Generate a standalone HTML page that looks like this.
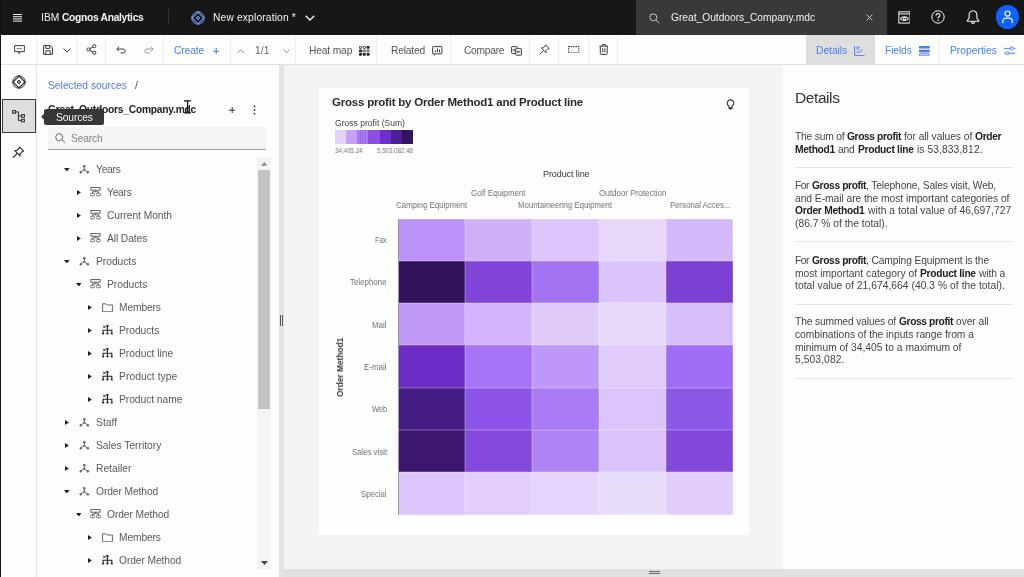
<!DOCTYPE html>
<html>
<head>
<meta charset="utf-8">
<title>IBM Cognos Analytics</title>
<style>
*{box-sizing:border-box;margin:0;padding:0}
html,body{width:1024px;height:577px;overflow:hidden;background:#fdfdfc;font-family:"Liberation Sans",sans-serif;color:#333}
.abs{position:absolute}
#root{position:relative;width:1024px;height:577px;overflow:hidden;background:#fdfdfc}
/* header */
#hdr{left:0;top:0;width:1024px;height:34.5px;background:#171717}
#hdr .t{position:absolute;color:#f4f4f4;font-size:11px;white-space:nowrap}
#srch{left:636px;top:0;width:250.8px;height:34.5px;background:#393939}
/* toolbar */
#tb{left:0;top:34.5px;width:1024px;height:30px;background:#fdfdfc;border-bottom:1px solid #dfdfdf}
#tb .sep{position:absolute;top:0;width:1px;height:29px;background:#e6e6e6}
#tb .t{position:absolute;font-size:11px;color:#555;white-space:nowrap;top:8px}
#tb .b{color:#4b7cf3}
/* left rail */
#rail{left:0;top:65px;width:37px;height:512px;background:#fdfdfc;border-right:1px solid #e4e4e4}
#edge{left:0;top:0;width:1.25px;height:577px;background:#111}
/* left panel */
#lp{left:37px;top:65px;width:242px;height:512px;background:#fdfdfc}
#div1{left:279px;top:65px;width:5px;height:512px;background:#e3e3e3}
#canvas{left:284px;top:65px;width:499px;height:504.4px;background:#f3f3f3}
#bot{left:284px;top:569.4px;width:740px;height:8px;background:#e0e0e0;z-index:5}
#card{left:319px;top:88px;width:430px;height:447px;background:#fefefd}
#rp{left:783px;top:65px;width:241px;height:512px;background:#fdfdfc}
.tree{position:absolute;font-size:11px;color:#555;white-space:nowrap}
.rt{position:absolute;left:795px;font-size:11px;line-height:13px;color:#444;white-space:nowrap}
.rt b{color:#222}
.hr{position:absolute;left:794.5px;width:218.5px;height:1px;background:#e2e2e2}
.tx{position:absolute;white-space:nowrap;line-height:normal;will-change:transform}
.bl{display:inline-block;width:0;height:0;vertical-align:baseline}
.tx b{font-weight:700;color:#222;letter-spacing:-0.21px}
</style>
</head>
<body>
<div id="root">
  <div id="hdr" class="abs"></div>
  <div id="srch" class="abs"></div>
  <div id="tb" class="abs"></div>
  <div id="rail" class="abs"></div>
  <div id="lp" class="abs"></div>
  <div id="div1" class="abs"></div>
  <div id="canvas" class="abs"></div>
  <div id="bot" class="abs"></div>
  <div id="card" class="abs"></div>
  <div id="rp" class="abs"></div>
<div class="hr" style="top:166.5px"></div><div class="hr" style="top:241px"></div><div class="hr" style="top:304.2px"></div><div class="hr" style="top:378.2px"></div>
<svg class="abs" style="left:13px;top:13.5px;" width="9" height="8" viewBox="0 0 9 8"><g stroke="#f4f4f4" stroke-width="1"><path d="M0 .5H9M0 2.7H9M0 4.9H9M0 7.1H9"/></g></svg>
<div class="abs" style="left:167.5px;top:9px;width:1px;height:16px;background:#323232"></div>
<svg class="abs" style="left:189.6px;top:9.600000000000001px;" width="16" height="16" viewBox="0 0 16 16"><g fill="none" stroke="#6a9bea" stroke-width="1"><circle cx="8" cy="8" r="6.2"/><path d="M8 2L14 8L8 14L2 8Z" stroke-width="1.15"/><path d="M8 6L10 8L8 10L6 8Z" fill="#6a9bea" fill-opacity=".55" stroke-width=".8"/></g></svg>
<svg class="abs" style="left:305px;top:15px;" width="10" height="6" viewBox="0 0 10 6"><path d="M.7 .7L5 5L9.3 .7" fill="none" stroke="#f4f4f4" stroke-width="1.3"/></svg>
<svg class="abs" style="left:648.5px;top:12.5px;" width="11" height="11" viewBox="0 0 11 11"><g fill="none" stroke="#c6c6c6" stroke-width="1"><circle cx="4.3" cy="4.3" r="3.5"/><path d="M6.9 6.9L10.3 10.3"/></g></svg>
<svg class="abs" style="left:865.5px;top:14px;" width="7" height="7" viewBox="0 0 7 7"><path d="M.6 .6L6.4 6.4M6.4 .6L.6 6.4" stroke="#c6c6c6" stroke-width="1" fill="none"/></svg>
<svg class="abs" style="left:897.5px;top:11px;" width="12.9" height="12.9" viewBox="0 0 14 14"><g fill="none" stroke="#f4f4f4" stroke-width="1.1"><rect x=".9" y=".9" width="12.2" height="12.2"/><path d="M.9 3.2H13.1"/><path d="M2.7 8.3C4.2 5.6 9.8 5.6 11.3 8.3C9.8 11 4.2 11 2.7 8.3Z"/><circle cx="7" cy="8.3" r="1.35"/></g></svg>
<svg class="abs" style="left:930px;top:9.3px;" width="16" height="16" viewBox="0 0 16 16"><circle cx="8" cy="8" r="6.2" fill="none" stroke="#f4f4f4" stroke-width="1"/><path d="M6 6.6C6 5.2 7 4.6 8 4.6C9.2 4.6 10 5.4 10 6.4C10 7.8 8 7.8 8 9.4" fill="none" stroke="#f4f4f4" stroke-width="1.1"/><circle cx="8" cy="11.2" r=".75" fill="#f4f4f4"/></svg>
<svg class="abs" style="left:965.5px;top:10px;" width="14" height="14.5" viewBox="0 0 14 14.5"><path d="M7 .8C4.3 .8 3.1 3 3.1 5.2V8.3L1.3 10.4V11.3H12.7V10.4L10.9 8.3V5.2C10.9 3 9.7 .8 7 .8Z" fill="none" stroke="#f4f4f4" stroke-width="1.1"/><path d="M5.3 11.6C5.5 12.8 6.2 13.4 7 13.4C7.8 13.4 8.5 12.8 8.7 11.6" fill="none" stroke="#f4f4f4" stroke-width="1.1"/></svg>
<div class="abs" style="left:995.8px;top:5.2px;width:23.4px;height:23.4px;border-radius:50%;background:#0f62fe"></div>
<svg class="abs" style="left:1001px;top:10px;" width="13" height="14" viewBox="0 0 13 14"><g fill="none" stroke="#fff" stroke-width="1.2"><circle cx="6.5" cy="3.6" r="2.6"/><path d="M1.8 13V11.2C1.8 9.2 3.4 8.2 5 8.2H8C9.6 8.2 11.2 9.2 11.2 11.2V13"/></g></svg>
<div class="abs" style="left:36.0px;top:35px;width:1px;height:29px;background:#ededed"></div>
<div class="abs" style="left:76.0px;top:35px;width:1px;height:29px;background:#ededed"></div>
<div class="abs" style="left:104.8px;top:35px;width:1px;height:29px;background:#ededed"></div>
<div class="abs" style="left:163.1px;top:35px;width:1px;height:29px;background:#ededed"></div>
<div class="abs" style="left:230.2px;top:35px;width:1px;height:29px;background:#ededed"></div>
<div class="abs" style="left:294.9px;top:35px;width:1px;height:29px;background:#ededed"></div>
<div class="abs" style="left:376.1px;top:35px;width:1px;height:29px;background:#ededed"></div>
<div class="abs" style="left:449.7px;top:35px;width:1px;height:29px;background:#ededed"></div>
<div class="abs" style="left:529.0px;top:35px;width:1px;height:29px;background:#ededed"></div>
<div class="abs" style="left:557.9px;top:35px;width:1px;height:29px;background:#ededed"></div>
<div class="abs" style="left:587.9px;top:35px;width:1px;height:29px;background:#ededed"></div>
<div class="abs" style="left:616.9px;top:35px;width:1px;height:29px;background:#ededed"></div>
<div class="abs" style="left:938.9px;top:35px;width:1px;height:29px;background:#ededed"></div>
<div class="abs" style="left:805.5px;top:34.5px;width:69.5px;height:29.5px;background:#dedede"></div>
<svg class="abs" style="left:13.5px;top:44.5px;" width="11" height="10" viewBox="0 0 11 10"><g fill="none" stroke="#3c3c3c" stroke-width="1"><path d="M.6 .6H10.4V6.6H6.4L5.2 8.6L4.6 8.2L5.4 6.6H.6Z"/><path d="M2.8 3.6H8.2" stroke-dasharray="1 .6"/></g></svg>
<svg class="abs" style="left:43px;top:45px;" width="10" height="10" viewBox="0 0 10 10"><g fill="none" stroke="#3c3c3c" stroke-width="1"><path d="M.6 .6H7.4L9.4 2.6V9.4H.6Z"/><path d="M2.8 .6V3.4H6.8V.6"/><path d="M2.8 9.4V5.8H7.2V9.4"/></g></svg>
<svg class="abs" style="left:63.3px;top:47.8px;" width="8" height="4.6" viewBox="0 0 8 4.6"><path d="M.5 .5L4.0 3.8999999999999995L7.5 .5" fill="none" stroke="#3c3c3c" stroke-width="1"/></svg>
<svg class="abs" style="left:85.5px;top:44px;" width="11" height="11" viewBox="0 0 11 11"><g fill="none" stroke="#3c3c3c" stroke-width="1"><circle cx="8.3" cy="2.2" r="1.6"/><circle cx="2.4" cy="5.5" r="1.6"/><circle cx="8.3" cy="8.8" r="1.6"/><path d="M3.8 4.7L6.9 3M3.8 6.3L6.9 8"/></g></svg>
<svg class="abs" style="left:115.5px;top:46px;" width="10" height="8" viewBox="0 0 10 8"><g fill="none" stroke="#3c3c3c" stroke-width="1"><path d="M3.2 .7L.8 3L3.2 5.3"/><path d="M.9 3H7C8.4 3 9.3 3.9 9.3 5C9.3 6.1 8.4 7 7 7H4.6"/></g></svg>
<svg class="abs" style="left:144px;top:46px;" width="10" height="8" viewBox="0 0 10 8"><g fill="none" stroke="#9a9a9a" stroke-width="1"><path d="M6.8 .7L9.2 3L6.8 5.3"/><path d="M9.1 3H3C1.6 3 .7 3.9 .7 5C.7 6.1 1.6 7 3 7H5.4"/></g></svg>
<svg class="abs" style="left:212.8px;top:47.6px;" width="6.4" height="6.4" viewBox="0 0 6.4 6.4"><path d="M3.2 0V6.4M0 3.2H6.4" stroke="#4b7cf3" stroke-width="1.1"/></svg>
<svg class="abs" style="left:236.7px;top:48.8px;" width="7.6" height="4.4" viewBox="0 0 7.6 4.4"><path d="M.5 3.9000000000000004L3.8 .7L7.1 3.9000000000000004" fill="none" stroke="#8a8a8a" stroke-width="1"/></svg>
<svg class="abs" style="left:282.8px;top:49px;" width="7.2" height="4.4" viewBox="0 0 7.2 4.4"><path d="M.5 .5L3.6 3.7L6.7 .5" fill="none" stroke="#8a8a8a" stroke-width="1"/></svg>
<svg class="abs" style="left:358.8px;top:46px;" width="11" height="10.2" viewBox="0 0 11 10.2"><rect x="0.4" y="0.4" width="2.2" height="2" rx=".5" fill="none" stroke="#222" stroke-width=".8"/><rect x="4.2" y="0.4" width="2.2" height="2" rx=".5" fill="none" stroke="#222" stroke-width=".8"/><rect x="7.6" y="0.0" width="3" height="2.8" rx=".8" fill="#222"/><rect x="0.0" y="3.5" width="3" height="2.8" rx=".8" fill="#222"/><rect x="4.2" y="3.9" width="2.2" height="2" rx=".5" fill="none" stroke="#222" stroke-width=".8"/><rect x="8.0" y="3.9" width="2.2" height="2" rx=".5" fill="none" stroke="#222" stroke-width=".8"/><rect x="0.0" y="7.0" width="3" height="2.8" rx=".8" fill="#222"/><rect x="3.8" y="7.0" width="3" height="2.8" rx=".8" fill="#222"/><rect x="7.6" y="7.0" width="3" height="2.8" rx=".8" fill="#222"/></svg>
<svg class="abs" style="left:432px;top:46px;" width="10.5" height="9.8" viewBox="0 0 10.5 9.8"><g fill="none" stroke="#3c3c3c" stroke-width="1"><path d="M1.2 .6H9.3C9.7 .6 9.9 .8 9.9 1.2V7.2C9.9 7.6 9.7 7.8 9.3 7.8H3.4L2.2 9.2V7.8H1.2C.8 7.8 .6 7.6 .6 7.2V1.2C.6 .8 .8 .6 1.2 .6Z"/><path d="M3.5 6.3V4.6M5.5 6.3V2.6M7.5 6.3V3.5" stroke-width="1.05"/></g></svg>
<svg class="abs" style="left:510.5px;top:46px;" width="11" height="10" viewBox="0 0 11 10"><g fill="none" stroke="#3c3c3c" stroke-width="1"><rect x=".6" y=".6" width="5.6" height="6.8" rx=".6"/><rect x="4.8" y="2.4" width="5.6" height="6.8" rx=".6" fill="#fdfdfc"/><path d="M1.6 4H4.6M3.4 2.8L4.6 4L3.4 5.2"/><path d="M9.2 5.8H6.2M7.4 4.6L6.2 5.8L7.4 7"/></g></svg>
<svg class="abs" style="left:538.5px;top:44.3px;" width="11.0" height="11.0" viewBox="0 0 11 11"><g fill="none" stroke="#3c3c3c" stroke-width="1" stroke-linejoin="round"><path d="M6.6 .9L10.1 4.4L8.9 4.9L7.2 6.6L7 8.6L2.4 4L4.4 3.8L6.1 2.1Z"/><path d="M4.6 6.4L.8 10.2"/></g></svg>
<svg class="abs" style="left:568px;top:46px;" width="11.5" height="7.4" viewBox="0 0 11.5 7.4"><rect x=".6" y=".6" width="10.2" height="6.1" fill="none" stroke="#3c3c3c" stroke-width="1.1" stroke-dasharray="1.4 .9"/></svg>
<svg class="abs" style="left:598.5px;top:44.2px;" width="9.5" height="11" viewBox="0 0 9.5 11"><g fill="none" stroke="#3c3c3c" stroke-width="1"><path d="M.3 2.2H9.2"/><path d="M3.2 2V.6H6.3V2"/><path d="M1.3 2.4V9.6C1.3 10.1 1.6 10.4 2.1 10.4H7.4C7.9 10.4 8.2 10.1 8.2 9.6V2.4"/><path d="M3.7 4.4V8.2M5.8 4.4V8.2"/></g></svg>
<svg class="abs" style="left:854px;top:45.6px;" width="11" height="10.4" viewBox="0 0 11 10.4"><g fill="none" stroke="#4b7cf3" stroke-width="1"><path d="M.6 0V9.6H10.6"/><path d="M2.2 7.4L4.4 5.2L5.6 6.4L8.6 3.4"/><path d="M2.4 1.2H5.6M2.4 3H5.6"/></g></svg>
<svg class="abs" style="left:919.2px;top:45.8px;" width="11" height="10.4" viewBox="0 0 11 10.4"><g fill="#4b7cf3"><rect x="0" y="0" width="10.8" height="2.6" rx=".6"/><rect x="0" y="3.8" width="10.8" height="2.6" rx=".6"/><rect x=".5" y="7.9" width="9.8" height="2" rx=".6" fill="none" stroke="#4b7cf3" stroke-width="1"/></g></svg>
<svg class="abs" style="left:1004.3px;top:46px;" width="11.4" height="9.6" viewBox="0 0 11.4 9.6"><g fill="none" stroke="#4b7cf3" stroke-width="1"><path d="M0 2.4H6.2M9.4 2.4H11.4"/><circle cx="7.8" cy="2.4" r="1.5"/><path d="M0 7.2H2M5.2 7.2H11.4"/><circle cx="3.6" cy="7.2" r="1.5"/></g></svg>
<svg class="abs" style="left:10.899999999999999px;top:73.8px;" width="16" height="16" viewBox="0 0 16 16"><g fill="none" stroke="#2a2a2a" stroke-width="1"><circle cx="8" cy="8" r="6.2"/><path d="M8 2L14 8L8 14L2 8Z" stroke-width="1.15"/><path d="M8 6L10 8L8 10L6 8Z" fill="#2a2a2a" fill-opacity=".55" stroke-width=".8"/></g></svg>
<div class="abs" style="left:1.5px;top:99.2px;width:34.5px;height:34px;background:#dedede;border:1px solid #3a3a3a"></div>
<svg class="abs" style="left:12.3px;top:109.8px;" width="14" height="13" viewBox="0 0 14 13"><g fill="none" stroke="#2a2a2a" stroke-width="1"><rect x=".6" y=".6" width="2.8" height="2.6"/><path d="M3.4 1.9H6.4V10.4H9.4M6.4 6H9.4"/><rect x="9.6" y="4.6" width="2.8" height="2.6"/><rect x="9.6" y="9.2" width="2.8" height="2.6"/></g></svg>
<svg class="abs" style="left:12.3px;top:145.5px;" width="12.649999999999999" height="12.649999999999999" viewBox="0 0 11 11"><g fill="none" stroke="#2a2a2a" stroke-width="1" stroke-linejoin="round"><path d="M6.6 .9L10.1 4.4L8.9 4.9L7.2 6.6L7 8.6L2.4 4L4.4 3.8L6.1 2.1Z"/><path d="M4.6 6.4L.8 10.2"/></g></svg>
<div class="abs" style="left:44px;top:108.6px;width:59.8px;height:16px;border-radius:2px;background:#363636;z-index:10"></div>
<svg class="abs" style="left:40.6px;top:113px;z-index:10;" width="4" height="8" viewBox="0 0 4 8"><path d="M4 0L0 3.8L4 7.6Z" fill="#363636"/></svg>
<svg class="abs" style="left:229px;top:106.7px;" width="6.4" height="6.4" viewBox="0 0 6.4 6.4"><path d="M3.2 0V6.4M0 3.2H6.4" stroke="#333" stroke-width="1"/></svg>
<svg class="abs" style="left:253.4px;top:104.9px;" width="3" height="10" viewBox="0 0 3 10"><g fill="#333"><circle cx="1.5" cy="1.4" r=".9"/><circle cx="1.5" cy="5" r=".9"/><circle cx="1.5" cy="8.6" r=".9"/></g></svg>
<div class="abs" style="left:48px;top:126.9px;width:218px;height:22.9px;background:#f5f5f5;border-bottom:1px solid #a0a0a0"></div>
<svg class="abs" style="left:54.6px;top:133.2px;" width="11" height="10.5" viewBox="0 0 11 10.5"><g fill="none" stroke="#6a6a6a" stroke-width="1"><circle cx="4.2" cy="4.2" r="3.5"/><path d="M6.8 6.8L10.2 9.8"/></g></svg>
<svg class="abs" style="left:183.9px;top:100.3px;z-index:30;" width="7.2" height="13.8" viewBox="0 0 7.2 13.8"><path d="M0 .8H7.2M3.6 .8V13M0 13H7.2" fill="none" stroke="#111" stroke-width="1.25"/></svg>
<div class="abs" style="left:257.3px;top:157px;width:13.5px;height:412px;background:#f3f3f3"></div>
<div class="abs" style="left:258.2px;top:170.1px;width:11.6px;height:238.7px;background:#c2c2c2"></div>
<svg class="abs" style="left:260.6px;top:162.4px;" width="6.6" height="3.8" viewBox="0 0 6.6 3.8"><path d="M0 3.8L3.3 0L6.6 3.8Z" fill="#8c8c8c"/></svg>
<svg class="abs" style="left:261px;top:560.5px;" width="7" height="4" viewBox="0 0 7 4"><path d="M0 0L3.5 4L7 0Z" fill="#444"/></svg>
<svg class="abs" style="left:64.0px;top:167.6px;" width="5.6" height="3.6" viewBox="0 0 5.6 3.6"><path d="M0 0L5.6 0L2.8 3.6Z" fill="#222"/></svg>
<svg class="abs" style="left:79.0px;top:164.79999999999998px;" width="11" height="9" viewBox="0 0 11 9"><g stroke="#666" stroke-width="1" fill="#666"><path d="M5.3 1.2V4.7L1.9 7.1M5.3 4.7L8.7 7.1" fill="none"/><circle cx="5.3" cy="1.2" r=".9"/><circle cx="1.7" cy="7.3" r=".85"/><circle cx="8.9" cy="7.3" r=".85"/><circle cx="5.3" cy="4.7" r=".6"/></g></svg>
<svg class="abs" style="left:76.8px;top:189.6px;" width="3.9" height="5" viewBox="0 0 3.9 5"><path d="M0 0L3.9 2.5L0 5Z" fill="#222"/></svg>
<svg class="abs" style="left:89.9px;top:187.29999999999998px;" width="11" height="9.4" viewBox="0 0 11 9.4"><g stroke="#666" stroke-width="1" fill="none"><rect x=".9" y=".5" width="9.2" height="2.7"/><path d="M5.5 3.2V4.8M2.5 6.3V4.8H8.5V6.3"/><rect x=".5" y="6.3" width="4" height="2.5" rx="1.1"/><rect x="6.5" y="6.3" width="4" height="2.5" rx="1.1"/></g></svg>
<svg class="abs" style="left:76.8px;top:212.6px;" width="3.9" height="5" viewBox="0 0 3.9 5"><path d="M0 0L3.9 2.5L0 5Z" fill="#222"/></svg>
<svg class="abs" style="left:89.9px;top:210.29999999999998px;" width="11" height="9.4" viewBox="0 0 11 9.4"><g stroke="#666" stroke-width="1" fill="none"><rect x=".9" y=".5" width="9.2" height="2.7"/><path d="M5.5 3.2V4.8M2.5 6.3V4.8H8.5V6.3"/><rect x=".5" y="6.3" width="4" height="2.5" rx="1.1"/><rect x="6.5" y="6.3" width="4" height="2.5" rx="1.1"/></g></svg>
<svg class="abs" style="left:76.8px;top:235.6px;" width="3.9" height="5" viewBox="0 0 3.9 5"><path d="M0 0L3.9 2.5L0 5Z" fill="#222"/></svg>
<svg class="abs" style="left:89.9px;top:233.29999999999998px;" width="11" height="9.4" viewBox="0 0 11 9.4"><g stroke="#666" stroke-width="1" fill="none"><rect x=".9" y=".5" width="9.2" height="2.7"/><path d="M5.5 3.2V4.8M2.5 6.3V4.8H8.5V6.3"/><rect x=".5" y="6.3" width="4" height="2.5" rx="1.1"/><rect x="6.5" y="6.3" width="4" height="2.5" rx="1.1"/></g></svg>
<svg class="abs" style="left:64.0px;top:259.59999999999997px;" width="5.6" height="3.6" viewBox="0 0 5.6 3.6"><path d="M0 0L5.6 0L2.8 3.6Z" fill="#222"/></svg>
<svg class="abs" style="left:79.0px;top:256.8px;" width="11" height="9" viewBox="0 0 11 9"><g stroke="#666" stroke-width="1" fill="#666"><path d="M5.3 1.2V4.7L1.9 7.1M5.3 4.7L8.7 7.1" fill="none"/><circle cx="5.3" cy="1.2" r=".9"/><circle cx="1.7" cy="7.3" r=".85"/><circle cx="8.9" cy="7.3" r=".85"/><circle cx="5.3" cy="4.7" r=".6"/></g></svg>
<svg class="abs" style="left:75.5px;top:282.59999999999997px;" width="5.6" height="3.6" viewBox="0 0 5.6 3.6"><path d="M0 0L5.6 0L2.8 3.6Z" fill="#222"/></svg>
<svg class="abs" style="left:89.9px;top:279.3px;" width="11" height="9.4" viewBox="0 0 11 9.4"><g stroke="#666" stroke-width="1" fill="none"><rect x=".9" y=".5" width="9.2" height="2.7"/><path d="M5.5 3.2V4.8M2.5 6.3V4.8H8.5V6.3"/><rect x=".5" y="6.3" width="4" height="2.5" rx="1.1"/><rect x="6.5" y="6.3" width="4" height="2.5" rx="1.1"/></g></svg>
<svg class="abs" style="left:88.3px;top:304.59999999999997px;" width="3.9" height="5" viewBox="0 0 3.9 5"><path d="M0 0L3.9 2.5L0 5Z" fill="#222"/></svg>
<svg class="abs" style="left:101.8px;top:302.5px;" width="11" height="9.4" viewBox="0 0 11 9.4"><path d="M.6 .8H4L5.2 2H10.4V8.8H.6Z" fill="none" stroke="#666" stroke-width="1"/></svg>
<svg class="abs" style="left:88.3px;top:327.59999999999997px;" width="3.9" height="5" viewBox="0 0 3.9 5"><path d="M0 0L3.9 2.5L0 5Z" fill="#222"/></svg>
<svg class="abs" style="left:102.2px;top:325.09999999999997px;" width="10.8" height="9.8" viewBox="0 0 10.8 9.8"><g fill="#222" stroke="#222" stroke-width="1"><path d="M1.1 .6L3.7 3.2M3.7 .6L1.1 3.2" fill="none" stroke-width=".9"/><rect x="4.4" y="0" width="2.1" height="1.9" stroke="none"/><path d="M5.45 1.6V5.3M1.1 7.6V5.3H9.8V7.6M5.45 5.3V7.6" fill="none" stroke-width="1.15"/><rect x="0" y="7.4" width="2.2" height="2.2" rx=".8" stroke="none"/><rect x="4.35" y="7.4" width="2.2" height="2.2" rx=".8" stroke="none"/><rect x="8.7" y="7.4" width="2.1" height="2.2" rx=".8" stroke="none"/></g></svg>
<svg class="abs" style="left:88.3px;top:350.59999999999997px;" width="3.9" height="5" viewBox="0 0 3.9 5"><path d="M0 0L3.9 2.5L0 5Z" fill="#222"/></svg>
<svg class="abs" style="left:102.2px;top:348.09999999999997px;" width="10.8" height="9.8" viewBox="0 0 10.8 9.8"><g fill="#222" stroke="#222" stroke-width="1"><path d="M1.1 .6L3.7 3.2M3.7 .6L1.1 3.2" fill="none" stroke-width=".9"/><rect x="4.4" y="0" width="2.1" height="1.9" stroke="none"/><path d="M5.45 1.6V5.3M1.1 7.6V5.3H9.8V7.6M5.45 5.3V7.6" fill="none" stroke-width="1.15"/><rect x="0" y="7.4" width="2.2" height="2.2" rx=".8" stroke="none"/><rect x="4.35" y="7.4" width="2.2" height="2.2" rx=".8" stroke="none"/><rect x="8.7" y="7.4" width="2.1" height="2.2" rx=".8" stroke="none"/></g></svg>
<svg class="abs" style="left:88.3px;top:373.59999999999997px;" width="3.9" height="5" viewBox="0 0 3.9 5"><path d="M0 0L3.9 2.5L0 5Z" fill="#222"/></svg>
<svg class="abs" style="left:102.2px;top:371.09999999999997px;" width="10.8" height="9.8" viewBox="0 0 10.8 9.8"><g fill="#222" stroke="#222" stroke-width="1"><path d="M1.1 .6L3.7 3.2M3.7 .6L1.1 3.2" fill="none" stroke-width=".9"/><rect x="4.4" y="0" width="2.1" height="1.9" stroke="none"/><path d="M5.45 1.6V5.3M1.1 7.6V5.3H9.8V7.6M5.45 5.3V7.6" fill="none" stroke-width="1.15"/><rect x="0" y="7.4" width="2.2" height="2.2" rx=".8" stroke="none"/><rect x="4.35" y="7.4" width="2.2" height="2.2" rx=".8" stroke="none"/><rect x="8.7" y="7.4" width="2.1" height="2.2" rx=".8" stroke="none"/></g></svg>
<svg class="abs" style="left:88.3px;top:396.59999999999997px;" width="3.9" height="5" viewBox="0 0 3.9 5"><path d="M0 0L3.9 2.5L0 5Z" fill="#222"/></svg>
<svg class="abs" style="left:102.2px;top:394.09999999999997px;" width="10.8" height="9.8" viewBox="0 0 10.8 9.8"><g fill="#222" stroke="#222" stroke-width="1"><path d="M1.1 .6L3.7 3.2M3.7 .6L1.1 3.2" fill="none" stroke-width=".9"/><rect x="4.4" y="0" width="2.1" height="1.9" stroke="none"/><path d="M5.45 1.6V5.3M1.1 7.6V5.3H9.8V7.6M5.45 5.3V7.6" fill="none" stroke-width="1.15"/><rect x="0" y="7.4" width="2.2" height="2.2" rx=".8" stroke="none"/><rect x="4.35" y="7.4" width="2.2" height="2.2" rx=".8" stroke="none"/><rect x="8.7" y="7.4" width="2.1" height="2.2" rx=".8" stroke="none"/></g></svg>
<svg class="abs" style="left:65.3px;top:419.59999999999997px;" width="3.9" height="5" viewBox="0 0 3.9 5"><path d="M0 0L3.9 2.5L0 5Z" fill="#222"/></svg>
<svg class="abs" style="left:79.0px;top:417.8px;" width="11" height="9" viewBox="0 0 11 9"><g stroke="#666" stroke-width="1" fill="#666"><path d="M5.3 1.2V4.7L1.9 7.1M5.3 4.7L8.7 7.1" fill="none"/><circle cx="5.3" cy="1.2" r=".9"/><circle cx="1.7" cy="7.3" r=".85"/><circle cx="8.9" cy="7.3" r=".85"/><circle cx="5.3" cy="4.7" r=".6"/></g></svg>
<svg class="abs" style="left:65.3px;top:442.59999999999997px;" width="3.9" height="5" viewBox="0 0 3.9 5"><path d="M0 0L3.9 2.5L0 5Z" fill="#222"/></svg>
<svg class="abs" style="left:79.0px;top:440.8px;" width="11" height="9" viewBox="0 0 11 9"><g stroke="#666" stroke-width="1" fill="#666"><path d="M5.3 1.2V4.7L1.9 7.1M5.3 4.7L8.7 7.1" fill="none"/><circle cx="5.3" cy="1.2" r=".9"/><circle cx="1.7" cy="7.3" r=".85"/><circle cx="8.9" cy="7.3" r=".85"/><circle cx="5.3" cy="4.7" r=".6"/></g></svg>
<svg class="abs" style="left:65.3px;top:465.59999999999997px;" width="3.9" height="5" viewBox="0 0 3.9 5"><path d="M0 0L3.9 2.5L0 5Z" fill="#222"/></svg>
<svg class="abs" style="left:79.0px;top:463.8px;" width="11" height="9" viewBox="0 0 11 9"><g stroke="#666" stroke-width="1" fill="#666"><path d="M5.3 1.2V4.7L1.9 7.1M5.3 4.7L8.7 7.1" fill="none"/><circle cx="5.3" cy="1.2" r=".9"/><circle cx="1.7" cy="7.3" r=".85"/><circle cx="8.9" cy="7.3" r=".85"/><circle cx="5.3" cy="4.7" r=".6"/></g></svg>
<svg class="abs" style="left:64.0px;top:489.59999999999997px;" width="5.6" height="3.6" viewBox="0 0 5.6 3.6"><path d="M0 0L5.6 0L2.8 3.6Z" fill="#222"/></svg>
<svg class="abs" style="left:79.0px;top:486.8px;" width="11" height="9" viewBox="0 0 11 9"><g stroke="#666" stroke-width="1" fill="#666"><path d="M5.3 1.2V4.7L1.9 7.1M5.3 4.7L8.7 7.1" fill="none"/><circle cx="5.3" cy="1.2" r=".9"/><circle cx="1.7" cy="7.3" r=".85"/><circle cx="8.9" cy="7.3" r=".85"/><circle cx="5.3" cy="4.7" r=".6"/></g></svg>
<svg class="abs" style="left:75.5px;top:512.6px;" width="5.6" height="3.6" viewBox="0 0 5.6 3.6"><path d="M0 0L5.6 0L2.8 3.6Z" fill="#222"/></svg>
<svg class="abs" style="left:89.9px;top:509.30000000000007px;" width="11" height="9.4" viewBox="0 0 11 9.4"><g stroke="#666" stroke-width="1" fill="none"><rect x=".9" y=".5" width="9.2" height="2.7"/><path d="M5.5 3.2V4.8M2.5 6.3V4.8H8.5V6.3"/><rect x=".5" y="6.3" width="4" height="2.5" rx="1.1"/><rect x="6.5" y="6.3" width="4" height="2.5" rx="1.1"/></g></svg>
<svg class="abs" style="left:88.3px;top:534.6px;" width="3.9" height="5" viewBox="0 0 3.9 5"><path d="M0 0L3.9 2.5L0 5Z" fill="#222"/></svg>
<svg class="abs" style="left:101.8px;top:532.5px;" width="11" height="9.4" viewBox="0 0 11 9.4"><path d="M.6 .8H4L5.2 2H10.4V8.8H.6Z" fill="none" stroke="#666" stroke-width="1"/></svg>
<svg class="abs" style="left:88.3px;top:557.6px;" width="3.9" height="5" viewBox="0 0 3.9 5"><path d="M0 0L3.9 2.5L0 5Z" fill="#222"/></svg>
<svg class="abs" style="left:102.2px;top:555.1px;" width="10.8" height="9.8" viewBox="0 0 10.8 9.8"><g fill="#222" stroke="#222" stroke-width="1"><path d="M1.1 .6L3.7 3.2M3.7 .6L1.1 3.2" fill="none" stroke-width=".9"/><rect x="4.4" y="0" width="2.1" height="1.9" stroke="none"/><path d="M5.45 1.6V5.3M1.1 7.6V5.3H9.8V7.6M5.45 5.3V7.6" fill="none" stroke-width="1.15"/><rect x="0" y="7.4" width="2.2" height="2.2" rx=".8" stroke="none"/><rect x="4.35" y="7.4" width="2.2" height="2.2" rx=".8" stroke="none"/><rect x="8.7" y="7.4" width="2.1" height="2.2" rx=".8" stroke="none"/></g></svg>
<div class="abs" style="left:280.3px;top:314.5px;width:1px;height:11px;background:#555"></div>
<div class="abs" style="left:282.3px;top:314.5px;width:1px;height:11px;background:#555"></div>
<div class="abs" style="left:649.4px;top:571.2px;width:10.4px;height:1.1px;background:#666;z-index:6"></div>
<div class="abs" style="left:649.4px;top:573.1px;width:10.4px;height:1.1px;background:#666;z-index:6"></div>
<svg class="abs" style="left:725.5px;top:99.3px;" width="9" height="12" viewBox="0 0 9 12"><g fill="none" stroke="#333" stroke-width="1.1"><path d="M3 8.2V7.1A3.3 3.3 0 1 1 6 7.1V8.2"/><path d="M2.5 9.1H6.5" stroke="#222" stroke-width="1.7"/><path d="M3.7 10.6H5.3" stroke="#8a8a9a" stroke-width="1"/></g></svg>
<div class="abs" style="left:335.00px;top:130.1px;width:11.3px;height:13.6px;background:#e4d3fb"></div>
<div class="abs" style="left:346.15px;top:130.1px;width:11.3px;height:13.6px;background:#c4a0f9"></div>
<div class="abs" style="left:357.30px;top:130.1px;width:11.3px;height:13.6px;background:#aa7af5"></div>
<div class="abs" style="left:368.45px;top:130.1px;width:11.3px;height:13.6px;background:#8a4fe0"></div>
<div class="abs" style="left:379.60px;top:130.1px;width:11.3px;height:13.6px;background:#6e2fc8"></div>
<div class="abs" style="left:390.75px;top:130.1px;width:11.3px;height:13.6px;background:#4d1f96"></div>
<div class="abs" style="left:401.90px;top:130.1px;width:11.3px;height:13.6px;background:#341460"></div>
<div class="abs" style="left:359.50px;top:130.1px;width:.9px;height:13.6px;background:#9562ec;opacity:.75"></div>
<div class="abs" style="left:362.30px;top:130.1px;width:.9px;height:13.6px;background:#9562ec;opacity:.75"></div>
<div class="abs" style="left:365.10px;top:130.1px;width:.9px;height:13.6px;background:#9562ec;opacity:.75"></div>
<div class="abs" style="left:398px;top:218.50px;width:67px;height:42.30px;background:#bd93fa;box-shadow:inset 0 0 0 .5px rgba(255,255,255,.35)"></div>
<div class="abs" style="left:465px;top:218.50px;width:67px;height:42.30px;background:#cfb1fa;box-shadow:inset 0 0 0 .5px rgba(255,255,255,.35)"></div>
<div class="abs" style="left:532px;top:218.50px;width:67px;height:42.30px;background:#dcc6fb;box-shadow:inset 0 0 0 .5px rgba(255,255,255,.35)"></div>
<div class="abs" style="left:599px;top:218.50px;width:67px;height:42.30px;background:#e6d7fb;box-shadow:inset 0 0 0 .5px rgba(255,255,255,.35)"></div>
<div class="abs" style="left:666px;top:218.50px;width:67px;height:42.30px;background:#d4b9fa;box-shadow:inset 0 0 0 .5px rgba(255,255,255,.35)"></div>
<div class="abs" style="left:398px;top:260.80px;width:67px;height:42.30px;background:#31135c;box-shadow:inset 0 0 0 .5px rgba(255,255,255,.35)"></div>
<div class="abs" style="left:465px;top:260.80px;width:67px;height:42.30px;background:#8146d9;box-shadow:inset 0 0 0 .5px rgba(255,255,255,.35)"></div>
<div class="abs" style="left:532px;top:260.80px;width:67px;height:42.30px;background:#a373f1;box-shadow:inset 0 0 0 .5px rgba(255,255,255,.35)"></div>
<div class="abs" style="left:599px;top:260.80px;width:67px;height:42.30px;background:#dbc4fa;box-shadow:inset 0 0 0 .5px rgba(255,255,255,.35)"></div>
<div class="abs" style="left:666px;top:260.80px;width:67px;height:42.30px;background:#7a40d4;box-shadow:inset 0 0 0 .5px rgba(255,255,255,.35)"></div>
<div class="abs" style="left:398px;top:303.10px;width:67px;height:42.30px;background:#c19af9;box-shadow:inset 0 0 0 .5px rgba(255,255,255,.35)"></div>
<div class="abs" style="left:465px;top:303.10px;width:67px;height:42.30px;background:#d1b4f9;box-shadow:inset 0 0 0 .5px rgba(255,255,255,.35)"></div>
<div class="abs" style="left:532px;top:303.10px;width:67px;height:42.30px;background:#decbfa;box-shadow:inset 0 0 0 .5px rgba(255,255,255,.35)"></div>
<div class="abs" style="left:599px;top:303.10px;width:67px;height:42.30px;background:#e7d9fb;box-shadow:inset 0 0 0 .5px rgba(255,255,255,.35)"></div>
<div class="abs" style="left:666px;top:303.10px;width:67px;height:42.30px;background:#d6befa;box-shadow:inset 0 0 0 .5px rgba(255,255,255,.35)"></div>
<div class="abs" style="left:398px;top:345.40px;width:67px;height:42.30px;background:#6b2dc6;box-shadow:inset 0 0 0 .5px rgba(255,255,255,.35)"></div>
<div class="abs" style="left:465px;top:345.40px;width:67px;height:42.30px;background:#a672f6;box-shadow:inset 0 0 0 .5px rgba(255,255,255,.35)"></div>
<div class="abs" style="left:532px;top:345.40px;width:67px;height:42.30px;background:#be98f8;box-shadow:inset 0 0 0 .5px rgba(255,255,255,.35)"></div>
<div class="abs" style="left:599px;top:345.40px;width:67px;height:42.30px;background:#dfccfa;box-shadow:inset 0 0 0 .5px rgba(255,255,255,.35)"></div>
<div class="abs" style="left:666px;top:345.40px;width:67px;height:42.30px;background:#a26df6;box-shadow:inset 0 0 0 .5px rgba(255,255,255,.35)"></div>
<div class="abs" style="left:398px;top:387.70px;width:67px;height:42.30px;background:#451c84;box-shadow:inset 0 0 0 .5px rgba(255,255,255,.35)"></div>
<div class="abs" style="left:465px;top:387.70px;width:67px;height:42.30px;background:#8b54e6;box-shadow:inset 0 0 0 .5px rgba(255,255,255,.35)"></div>
<div class="abs" style="left:532px;top:387.70px;width:67px;height:42.30px;background:#ab7bf5;box-shadow:inset 0 0 0 .5px rgba(255,255,255,.35)"></div>
<div class="abs" style="left:599px;top:387.70px;width:67px;height:42.30px;background:#dcc5fa;box-shadow:inset 0 0 0 .5px rgba(255,255,255,.35)"></div>
<div class="abs" style="left:666px;top:387.70px;width:67px;height:42.30px;background:#8e58e7;box-shadow:inset 0 0 0 .5px rgba(255,255,255,.35)"></div>
<div class="abs" style="left:398px;top:430.00px;width:67px;height:42.30px;background:#3b1772;box-shadow:inset 0 0 0 .5px rgba(255,255,255,.35)"></div>
<div class="abs" style="left:465px;top:430.00px;width:67px;height:42.30px;background:#8249dc;box-shadow:inset 0 0 0 .5px rgba(255,255,255,.35)"></div>
<div class="abs" style="left:532px;top:430.00px;width:67px;height:42.30px;background:#b084f7;box-shadow:inset 0 0 0 .5px rgba(255,255,255,.35)"></div>
<div class="abs" style="left:599px;top:430.00px;width:67px;height:42.30px;background:#dbc3fa;box-shadow:inset 0 0 0 .5px rgba(255,255,255,.35)"></div>
<div class="abs" style="left:666px;top:430.00px;width:67px;height:42.30px;background:#8049da;box-shadow:inset 0 0 0 .5px rgba(255,255,255,.35)"></div>
<div class="abs" style="left:398px;top:472.30px;width:67px;height:42.30px;background:#dcc5fb;box-shadow:inset 0 0 0 .5px rgba(255,255,255,.35)"></div>
<div class="abs" style="left:465px;top:472.30px;width:67px;height:42.30px;background:#e2d0fa;box-shadow:inset 0 0 0 .5px rgba(255,255,255,.35)"></div>
<div class="abs" style="left:532px;top:472.30px;width:67px;height:42.30px;background:#e5d5fa;box-shadow:inset 0 0 0 .5px rgba(255,255,255,.35)"></div>
<div class="abs" style="left:599px;top:472.30px;width:67px;height:42.30px;background:#e8dcfb;box-shadow:inset 0 0 0 .5px rgba(255,255,255,.35)"></div>
<div class="abs" style="left:666px;top:472.30px;width:67px;height:42.30px;background:#e0cdfa;box-shadow:inset 0 0 0 .5px rgba(255,255,255,.35)"></div>
<div class="abs" style="left:397.5px;top:218.5px;width:1px;height:296.10px;background:#9a9a9a"></div>
<span class="tx" style="left:40.80px;top:12.00px;font-size:10.25px;color:#f4f4f4;font-weight:400;letter-spacing:0.055px;">IBM</span>
<span class="tx" style="left:61.80px;top:12.00px;font-size:10.25px;color:#f4f4f4;font-weight:700;letter-spacing:-0.294px;">Cognos Analytics</span>
<span class="tx" style="left:213.00px;top:12.00px;font-size:10.25px;color:#f4f4f4;font-weight:400;letter-spacing:0.156px;">New exploration *</span>
<span class="tx" style="left:671.00px;top:12.00px;font-size:10.25px;color:#f0f0f0;font-weight:400;letter-spacing:-0.020px;">Great_Outdoors_Company.mdc</span>
<span class="tx" style="left:173.60px;top:45.01px;font-size:10.25px;color:#4b7cf3;font-weight:400;letter-spacing:-0.128px;">Create</span>
<span class="tx" style="left:255.00px;top:45.01px;font-size:10.25px;color:#666;font-weight:400;letter-spacing:0.083px;">1/1</span>
<span class="tx" style="left:309.00px;top:45.01px;font-size:10.25px;color:#555;font-weight:400;letter-spacing:-0.157px;">Heat map</span>
<span class="tx" style="left:390.90px;top:45.01px;font-size:10.25px;color:#555;font-weight:400;letter-spacing:-0.178px;">Related</span>
<span class="tx" style="left:464.00px;top:45.01px;font-size:10.25px;color:#555;font-weight:400;letter-spacing:-0.279px;">Compare</span>
<span class="tx" style="left:815.80px;top:45.01px;font-size:10.25px;color:#4b7cf3;font-weight:400;letter-spacing:-0.021px;">Details</span>
<span class="tx" style="left:885.30px;top:45.01px;font-size:10.25px;color:#4b7cf3;font-weight:400;letter-spacing:-0.107px;">Fields</span>
<span class="tx" style="left:949.90px;top:45.01px;font-size:10.25px;color:#4b7cf3;font-weight:400;letter-spacing:0.028px;">Properties</span>
<span class="tx" style="left:48.20px;top:80.00px;font-size:10.25px;color:#4b7cf3;font-weight:400;letter-spacing:0.022px;">Selected sources</span>
<span class="tx" style="left:135.00px;top:80.00px;font-size:10.25px;color:#444;font-weight:400;">/</span>
<span class="tx" style="left:48.00px;top:104.01px;font-size:10.25px;color:#222;font-weight:700;letter-spacing:-0.237px;">Great_Outdoors_Company.mdc</span>
<span class="tx" style="left:70.90px;top:133.00px;font-size:10.25px;color:#858585;font-weight:400;letter-spacing:-0.147px;">Search</span>
<span class="tx" style="left:96.00px;top:164.01px;font-size:10.25px;color:#5a5a5a;font-weight:400;letter-spacing:-0.249px;">Years</span>
<span class="tx" style="left:107.30px;top:187.01px;font-size:10.25px;color:#5a5a5a;font-weight:400;letter-spacing:-0.249px;">Years</span>
<span class="tx" style="left:107.30px;top:210.01px;font-size:10.25px;color:#5a5a5a;font-weight:400;letter-spacing:-0.040px;">Current Month</span>
<span class="tx" style="left:107.30px;top:233.01px;font-size:10.25px;color:#5a5a5a;font-weight:400;letter-spacing:-0.091px;">All Dates</span>
<span class="tx" style="left:96.00px;top:256.01px;font-size:10.25px;color:#5a5a5a;font-weight:400;letter-spacing:-0.019px;">Products</span>
<span class="tx" style="left:107.30px;top:279.01px;font-size:10.25px;color:#5a5a5a;font-weight:400;letter-spacing:-0.019px;">Products</span>
<span class="tx" style="left:119.00px;top:302.01px;font-size:10.25px;color:#5a5a5a;font-weight:400;letter-spacing:-0.131px;">Members</span>
<span class="tx" style="left:119.00px;top:325.01px;font-size:10.25px;color:#5a5a5a;font-weight:400;letter-spacing:-0.019px;">Products</span>
<span class="tx" style="left:119.00px;top:348.01px;font-size:10.25px;color:#5a5a5a;font-weight:400;letter-spacing:0.013px;">Product line</span>
<span class="tx" style="left:119.00px;top:371.01px;font-size:10.25px;color:#5a5a5a;font-weight:400;letter-spacing:0.063px;">Product type</span>
<span class="tx" style="left:119.00px;top:394.01px;font-size:10.25px;color:#5a5a5a;font-weight:400;letter-spacing:-0.043px;">Product name</span>
<span class="tx" style="left:96.00px;top:417.01px;font-size:10.25px;color:#5a5a5a;font-weight:400;letter-spacing:0.079px;">Staff</span>
<span class="tx" style="left:96.00px;top:440.01px;font-size:10.25px;color:#5a5a5a;font-weight:400;letter-spacing:-0.002px;">Sales Territory</span>
<span class="tx" style="left:96.00px;top:463.01px;font-size:10.25px;color:#5a5a5a;font-weight:400;letter-spacing:-0.004px;">Retailer</span>
<span class="tx" style="left:96.00px;top:486.01px;font-size:10.25px;color:#5a5a5a;font-weight:400;letter-spacing:-0.096px;">Order Method</span>
<span class="tx" style="left:107.30px;top:509.01px;font-size:10.25px;color:#5a5a5a;font-weight:400;letter-spacing:-0.096px;">Order Method</span>
<span class="tx" style="left:119.00px;top:532.01px;font-size:10.25px;color:#5a5a5a;font-weight:400;letter-spacing:-0.131px;">Members</span>
<span class="tx" style="left:119.00px;top:555.01px;font-size:10.25px;color:#5a5a5a;font-weight:400;letter-spacing:-0.096px;">Order Method</span>
<span class="tx" style="left:55.60px;top:112.00px;font-size:10.25px;color:#f4f4f4;font-weight:400;letter-spacing:-0.116px;z-index:20;">Sources</span>
<span class="tx" style="left:332.00px;top:96.01px;font-size:11.5px;color:#2a2a2a;font-weight:700;letter-spacing:-0.211px;">Gross profit by Order Method1 and Product line</span>
<span class="tx" style="left:335.00px;top:118.01px;font-size:8.5px;color:#444;font-weight:400;letter-spacing:0.031px;">Gross profit (Sum)</span>
<span class="tx" style="left:335.00px;top:147.01px;font-size:6.5px;color:#777;font-weight:400;transform:scaleX(0.9508);transform-origin:0 0;">34,405.24</span>
<span class="tx" style="left:377.00px;top:147.01px;font-size:6.5px;color:#777;font-weight:400;transform:scaleX(0.9485);transform-origin:0 0;">5,503,082.48</span>
<span class="tx" style="left:542.50px;top:169.01px;font-size:9px;color:#333;font-weight:400;letter-spacing:-0.086px;">Product line</span>
<span class="tx" style="left:471.00px;top:188.01px;font-size:9px;color:#707070;font-weight:400;transform:scaleX(0.8784);transform-origin:0 0;">Golf Equipment</span>
<span class="tx" style="left:598.50px;top:188.01px;font-size:9px;color:#707070;font-weight:400;transform:scaleX(0.8935);transform-origin:0 0;">Outdoor Protection</span>
<span class="tx" style="left:396.00px;top:200.01px;font-size:9px;color:#707070;font-weight:400;transform:scaleX(0.8707);transform-origin:0 0;">Camping Equipment</span>
<span class="tx" style="left:518.00px;top:200.01px;font-size:9px;color:#707070;font-weight:400;transform:scaleX(0.8738);transform-origin:0 0;">Mountaineering Equipment</span>
<span class="tx" style="left:669.50px;top:200.01px;font-size:9px;color:#707070;font-weight:400;transform:scaleX(0.8699);transform-origin:0 0;">Personal Acces...</span>
<span class="tx" style="left:375.00px;top:235.00px;font-size:9px;color:#707070;font-weight:400;transform:scaleX(0.7659);transform-origin:0 0;">Fax</span>
<span class="tx" style="left:350.00px;top:277.01px;font-size:9px;color:#707070;font-weight:400;transform:scaleX(0.8785);transform-origin:0 0;">Telephone</span>
<span class="tx" style="left:372.00px;top:320.00px;font-size:9px;color:#707070;font-weight:400;transform:scaleX(0.8780);transform-origin:0 0;">Mail</span>
<span class="tx" style="left:364.00px;top:362.01px;font-size:9px;color:#707070;font-weight:400;transform:scaleX(0.8818);transform-origin:0 0;">E-mail</span>
<span class="tx" style="left:371.50px;top:404.02px;font-size:9px;color:#707070;font-weight:400;transform:scaleX(0.8177);transform-origin:0 0;">Web</span>
<span class="tx" style="left:351.50px;top:447.00px;font-size:9px;color:#707070;font-weight:400;transform:scaleX(0.8639);transform-origin:0 0;">Sales visit</span>
<span class="tx" style="left:361.00px;top:489.01px;font-size:9px;color:#707070;font-weight:400;transform:scaleX(0.8635);transform-origin:0 0;">Special</span>
<span class="tx" style="left:343.10px;top:388.80px;font-size:9px;color:#3a3a3a;font-weight:700;transform:rotate(-90deg) scaleX(0.9263);transform-origin:0 8.00px;">Order Method1</span>
<span class="tx" style="left:795.00px;top:89.00px;font-size:15.5px;color:#333;font-weight:400;letter-spacing:-0.413px;">Details</span>
<span class="tx" style="left:795.01px;top:131.00px;font-size:10.25px;color:#444;font-weight:400;letter-spacing:-0.183px;">The sum of</span>
<span class="tx" style="left:847.28px;top:131.00px;font-size:10.25px;color:#222;font-weight:700;letter-spacing:-0.397px;">Gross profit</span>
<span class="tx" style="left:903.99px;top:131.00px;font-size:10.25px;color:#444;font-weight:400;letter-spacing:-0.044px;">for all values of</span>
<span class="tx" style="left:975.00px;top:131.00px;font-size:10.25px;color:#222;font-weight:700;letter-spacing:-0.335px;">Order</span>
<span class="tx" style="left:795.01px;top:144.01px;font-size:10.25px;color:#222;font-weight:700;letter-spacing:-0.329px;">Method1</span>
<span class="tx" style="left:838.37px;top:144.01px;font-size:10.25px;color:#444;font-weight:400;letter-spacing:-0.235px;">and</span>
<span class="tx" style="left:857.82px;top:144.01px;font-size:10.25px;color:#222;font-weight:700;letter-spacing:-0.308px;">Product line</span>
<span class="tx" style="left:916.88px;top:144.01px;font-size:10.25px;color:#444;font-weight:400;letter-spacing:0.087px;">is 53,833,812.</span>
<span class="tx" style="left:795.01px;top:180.01px;font-size:10.25px;color:#444;font-weight:400;letter-spacing:-0.438px;">For</span>
<span class="tx" style="left:811.89px;top:180.01px;font-size:10.25px;color:#222;font-weight:700;letter-spacing:-0.378px;">Gross profit</span>
<span class="tx" style="left:866.49px;top:180.01px;font-size:10.25px;color:#444;font-weight:400;letter-spacing:-0.134px;">, Telephone, Sales visit, Web,</span>
<span class="tx" style="left:795.01px;top:193.01px;font-size:10.25px;color:#444;font-weight:400;letter-spacing:-0.032px;">and E-mail are the most important categories of</span>
<span class="tx" style="left:795.01px;top:205.01px;font-size:10.25px;color:#222;font-weight:700;letter-spacing:-0.272px;">Order Method1</span>
<span class="tx" style="left:867.67px;top:205.01px;font-size:10.25px;color:#444;font-weight:400;letter-spacing:0.040px;">with a total value of 46,697,727</span>
<span class="tx" style="left:795.01px;top:218.01px;font-size:10.25px;color:#444;font-weight:400;letter-spacing:0.012px;">(86.7 % of the total).</span>
<span class="tx" style="left:795.01px;top:255.01px;font-size:10.25px;color:#444;font-weight:400;letter-spacing:-0.438px;">For</span>
<span class="tx" style="left:811.89px;top:255.01px;font-size:10.25px;color:#222;font-weight:700;letter-spacing:-0.378px;">Gross profit</span>
<span class="tx" style="left:866.49px;top:255.01px;font-size:10.25px;color:#444;font-weight:400;letter-spacing:-0.111px;">, Camping Equipment is the</span>
<span class="tx" style="left:795.01px;top:268.02px;font-size:10.25px;color:#444;font-weight:400;letter-spacing:0.029px;">most important category of</span>
<span class="tx" style="left:919.93px;top:268.02px;font-size:10.25px;color:#222;font-weight:700;letter-spacing:-0.288px;">Product line</span>
<span class="tx" style="left:978.98px;top:268.02px;font-size:10.25px;color:#444;font-weight:400;letter-spacing:-0.128px;">with a</span>
<span class="tx" style="left:795.01px;top:280.02px;font-size:10.25px;color:#444;font-weight:400;letter-spacing:0.053px;">total value of 21,674,664 (40.3 % of the total).</span>
<span class="tx" style="left:795.01px;top:316.00px;font-size:10.25px;color:#444;font-weight:400;letter-spacing:-0.134px;">The summed values of</span>
<span class="tx" style="left:898.83px;top:316.00px;font-size:10.25px;color:#222;font-weight:700;letter-spacing:-0.397px;">Gross profit</span>
<span class="tx" style="left:955.78px;top:316.00px;font-size:10.25px;color:#444;font-weight:400;letter-spacing:-0.059px;">over all</span>
<span class="tx" style="left:795.01px;top:329.01px;font-size:10.25px;color:#444;font-weight:400;letter-spacing:-0.032px;">combinations of the inputs range from a</span>
<span class="tx" style="left:795.01px;top:342.01px;font-size:10.25px;color:#444;font-weight:400;letter-spacing:0.019px;">minimum of 34,405 to a maximum of</span>
<span class="tx" style="left:795.01px;top:354.00px;font-size:10.25px;color:#444;font-weight:400;letter-spacing:0.100px;">5,503,082.</span>
  <div id="edge" class="abs"></div>
</div>
</body>
</html>
